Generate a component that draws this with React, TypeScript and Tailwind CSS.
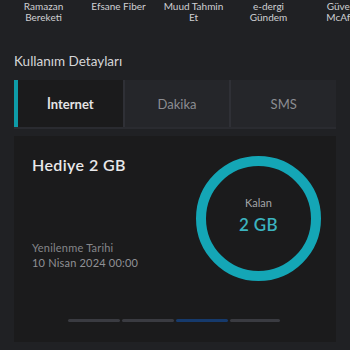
import React from 'react'

const shortcuts = [
    ['Ramazan', 'Bereketi'],
    ['Efsane Fiber'],
    ['Muud Tahmin', 'Et'],
    ['e-dergi', 'Gündem'],
    ['Güvenli', 'McAfee'],
]

const tabs = ['İnternet', 'Dakika', 'SMS']

export default function App() {
    return (
        <div className="w-[350px] h-[350px] overflow-hidden bg-[#202124] font-['Lato','Noto_Sans',sans-serif]">
            {/* Shortcuts row */}
            <div className="flex pl-[6px] h-[40px]">
                {shortcuts.map((lines, i) => (
                    <div key={i} className="w-[75px] shrink-0 flex flex-col items-center pt-[1px] text-[10px] leading-[11px] text-[#cfd0d3]">
                        {lines.map((l) => (
                            <span key={l} className="whitespace-nowrap">{l}</span>
                        ))}
                    </div>
                ))}
            </div>

            <div className="px-[14px]">
                <h2 className="mt-[13px] text-[13.5px] leading-[16px] text-[#d5d6d8]">Kullanım Detayları</h2>

                {/* Tabs */}
                <div className="mt-[11px] flex h-[49px] border-b-2 border-[#2a2b30]">
                    {tabs.map((t, i) => (
                        <div
                            key={t}
                            className={
                                i === 0
                                    ? 'flex-1 flex items-center justify-center pt-[2px] bg-[#1b1b1c] border-l-4 border-[#0e9ba8] text-[13px] font-bold text-[#e4e4e6]'
                                    : 'flex-1 flex items-center justify-center pt-[2px] bg-[#25262a] border-l-2 border-[#2f3036] text-[13px] text-[#8c8d92]'
                            }
                        >
                            {t}
                        </div>
                    ))}
                </div>

                {/* Card */}
                <div className="mt-[7px] h-[206px] bg-[#1b1b1c] flex flex-col">
                    <div className="flex">
                        <div className="flex-1 pl-[18px] pt-[20px] flex flex-col">
                            <div className="text-[16px] leading-[18px] font-semibold tracking-[0.4px] text-[#e8e8ea]">Hediye 2 GB</div>
                            <div className="mt-[66px] text-[11px] leading-[15px] tracking-[0.2px] text-[#85868a]">Yenilenme Tarihi</div>
                            <div className="text-[11px] leading-[15px] tracking-[0.2px] text-[#909195]">10 Nisan 2024 00:00</div>
                        </div>
                        <div className="mt-[20px] mr-[15px] w-[125px] h-[125px] rounded-full border-[10px] border-[#14a6b6] flex flex-col items-center justify-center">
                            <div className="text-[11px] leading-[14px] text-[#a3a4a8] mb-[6px] -mt-[8px]">Kalan</div>
                            <div className="text-[17px] leading-[18px] font-semibold tracking-[0.3px] text-[#3bb3bf]">2 GB</div>
                        </div>
                    </div>
                    <div className="mt-auto mb-[20px] flex justify-center gap-[2px] pr-[2px]">
                        <div className="w-[52px] h-[3px] rounded-full bg-[#3a3b41]" />
                        <div className="w-[52px] h-[3px] rounded-full bg-[#3a3b41]" />
                        <div className="w-[52px] h-[3px] rounded-full bg-[#163a6c]" />
                        <div className="w-[50px] h-[3px] rounded-full bg-[#3a3b41]" />
                    </div>
                </div>
            </div>
        </div>
    )
}
